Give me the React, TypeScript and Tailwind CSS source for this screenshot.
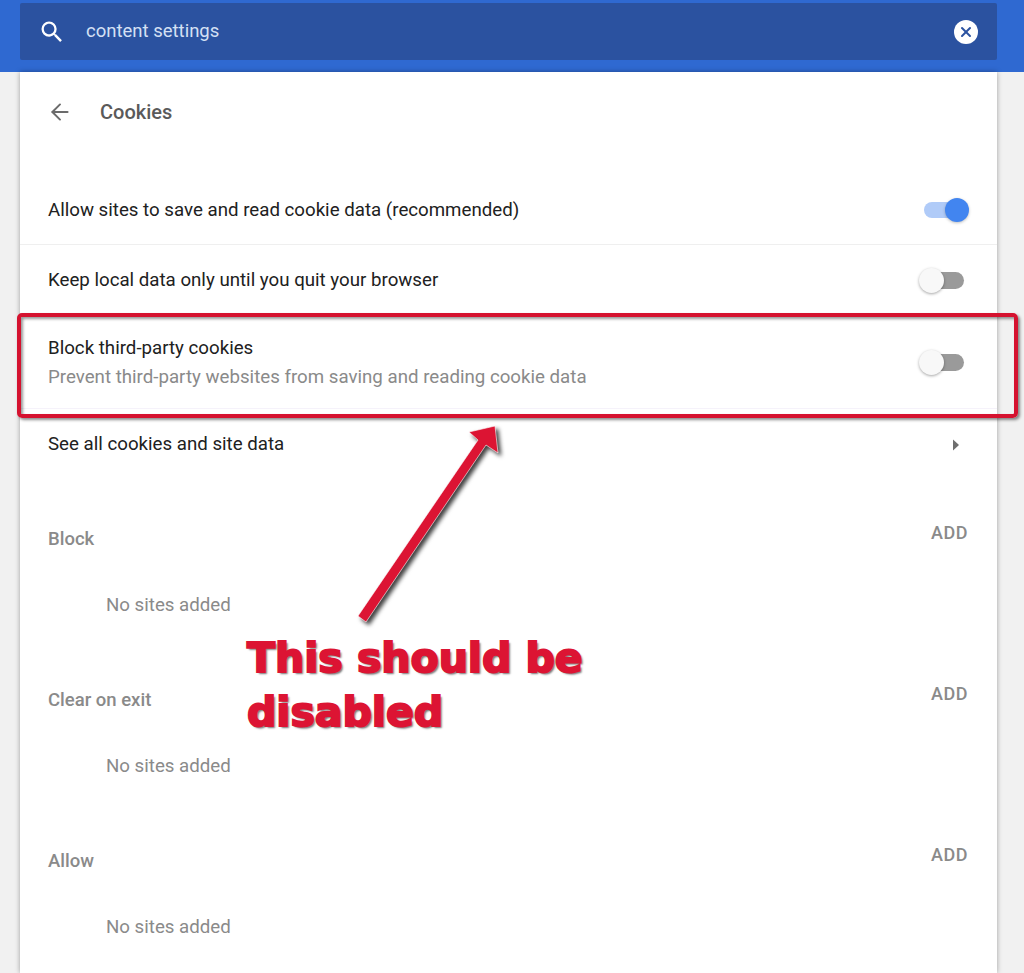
import { ArrowLeft, X } from "lucide-react";

const Toggle = ({ on = false }: { on?: boolean }) =>
  on ? (
    <div className="relative h-[16px] w-[40px] rounded-full bg-[#b0cbf8]">
      <div className="absolute right-[-5px] top-[-4px] h-[24px] w-[24px] rounded-full bg-[#4285f0] shadow-[0_1px_3px_rgba(0,0,0,0.25)]" />
    </div>
  ) : (
    <div className="relative h-[17px] w-[42px] rounded-full bg-[#9a9a9a]">
      <div className="absolute left-[-3px] top-[-4px] h-[25px] w-[25px] rounded-full bg-[#f8f8f8] shadow-[0_1px_3px_rgba(0,0,0,0.35)]" />
    </div>
  );

const SiteSection = ({ title, height }: { title: string; height: string }) => (
  <section className={`flex flex-col ${height}`}>
    <div className="flex items-start justify-between pl-[28px] pr-[29px]">
      <h2 className="mt-[4px] text-[18.5px] leading-[28px] font-medium text-[#8a8a8a]">{title}</h2>
      <span className="text-[18px] leading-[24px] font-medium tracking-[0.5px] text-[#8a8a8a]">ADD</span>
    </div>
    <p className="mt-[38px] pl-[86px] text-[18.7px] leading-[28px] text-[#8a8a8a]">No sites added</p>
  </section>
);

export default function App() {
  return (
    <div className="relative h-[973px] w-[1024px] overflow-hidden bg-[#f1f1f1] font-['Roboto',sans-serif]">
      <header className="h-[72px] bg-[#2f69d1] pt-[3px] px-[20px]">
        <div className="flex h-[57px] w-[977px] items-center rounded-[2px] bg-[#2b52a0] pl-[18px] pr-[19px]">
          <svg className="h-[28px] w-[28px]" viewBox="0 0 24 24" fill="#fff">
            <path d="M15.5 14h-.79l-.28-.27A6.471 6.471 0 0 0 16 9.5 6.5 6.5 0 1 0 9.5 16c1.61 0 3.09-.59 4.23-1.57l.27.28v.79l5 4.99L20.49 19l-4.99-5zm-6 0C7.01 14 5 11.99 5 9.5S7.01 5 9.5 5 14 7.01 14 9.5 11.99 14 9.5 14z" />
          </svg>
          <span className="ml-[20px] flex-1 text-[18.5px] text-[#d5e0f4]">content settings</span>
          <div className="flex h-[24px] w-[24px] items-center justify-center rounded-full bg-white">
            <X className="h-[16px] w-[16px] text-[#2b52a0]" strokeWidth={3} />
          </div>
        </div>
      </header>

      <main className="ml-[20px] h-[901px] w-[977px] bg-white shadow-[0_0_5px_rgba(0,0,0,0.35)]">
        <div className="flex h-[80px] items-center pl-[27px]">
          <ArrowLeft className="h-[26px] w-[26px] text-[#6b6b6b]" strokeWidth={1.8} />
          <h1 className="ml-[27px] text-[20px] font-medium text-[#5a5a5a]">Cookies</h1>
        </div>

        <div className="mt-[21px] flex h-[72px] items-center justify-between border-b border-[#efefef] pt-[3px] pl-[28px] pr-[33px]">
          <span className="text-[18.7px] text-[#212121]">Allow sites to save and read cookie data (recommended)</span>
          <Toggle on />
        </div>
        <div className="flex h-[70px] items-center justify-between pt-[1px] pl-[28px] pr-[33px]">
          <span className="text-[18.7px] text-[#212121]">Keep local data only until you quit your browser</span>
          <Toggle />
        </div>
        <div className="flex h-[93px] items-center justify-between pt-[2px] pl-[28px] pr-[33px]">
          <div>
            <div className="text-[18.7px] leading-[29px] text-[#212121]">Block third-party cookies</div>
            <div className="text-[18.7px] leading-[29px] text-[#8a8a8a]">Prevent third-party websites from saving and reading cookie data</div>
          </div>
          <Toggle />
        </div>
        <div className="flex h-[70px] items-center justify-between border-t border-[#f5f2fa] pt-[2px] pl-[28px] pr-[37px]">
          <span className="text-[18.7px] text-[#212121]">See all cookies and site data</span>
          <svg width="8" height="12" viewBox="0 0 8 12">
            <path d="M1 0.5 L7 6 L1 11.5 Z" fill="#6f6f6f" />
          </svg>
        </div>

        <div className="mt-[43px]">
          <SiteSection title="Block" height="h-[161px]" />
          <SiteSection title="Clear on exit" height="h-[161px]" />
          <SiteSection title="Allow" height="h-[120px]" />
        </div>
      </main>

      {/* annotation layer */}
      <div className="absolute left-[17px] top-[313px] h-[105px] w-[1001px] rounded-[5px] border-[4px] border-[#d5122f] shadow-[2px_2px_3px_rgba(0,0,0,0.45),inset_2px_2px_3px_rgba(0,0,0,0.4)]" />
      <svg className="absolute left-[340px] top-[410px] drop-shadow-[3px_3px_2px_rgba(0,0,0,0.75)]" width="180" height="220" viewBox="0 0 180 220">
        <path d="M26 212 L146 35 L158 43 L155 16 L129 22 L138 30 L18 206 Z" fill="#dc1433" stroke="#fff" strokeWidth="0.6" />
      </svg>
      <div className="absolute left-[247px] top-[631px] text-[41px] leading-[54px] font-bold text-[#dc1433] font-['DejaVu_Sans',sans-serif] [-webkit-text-stroke:2px_#dc1433] [text-shadow:2px_2px_2px_rgba(0,0,0,0.55)]">
        <div>This should be</div>
        <div>disabled</div>
      </div>
    </div>
  );
}
